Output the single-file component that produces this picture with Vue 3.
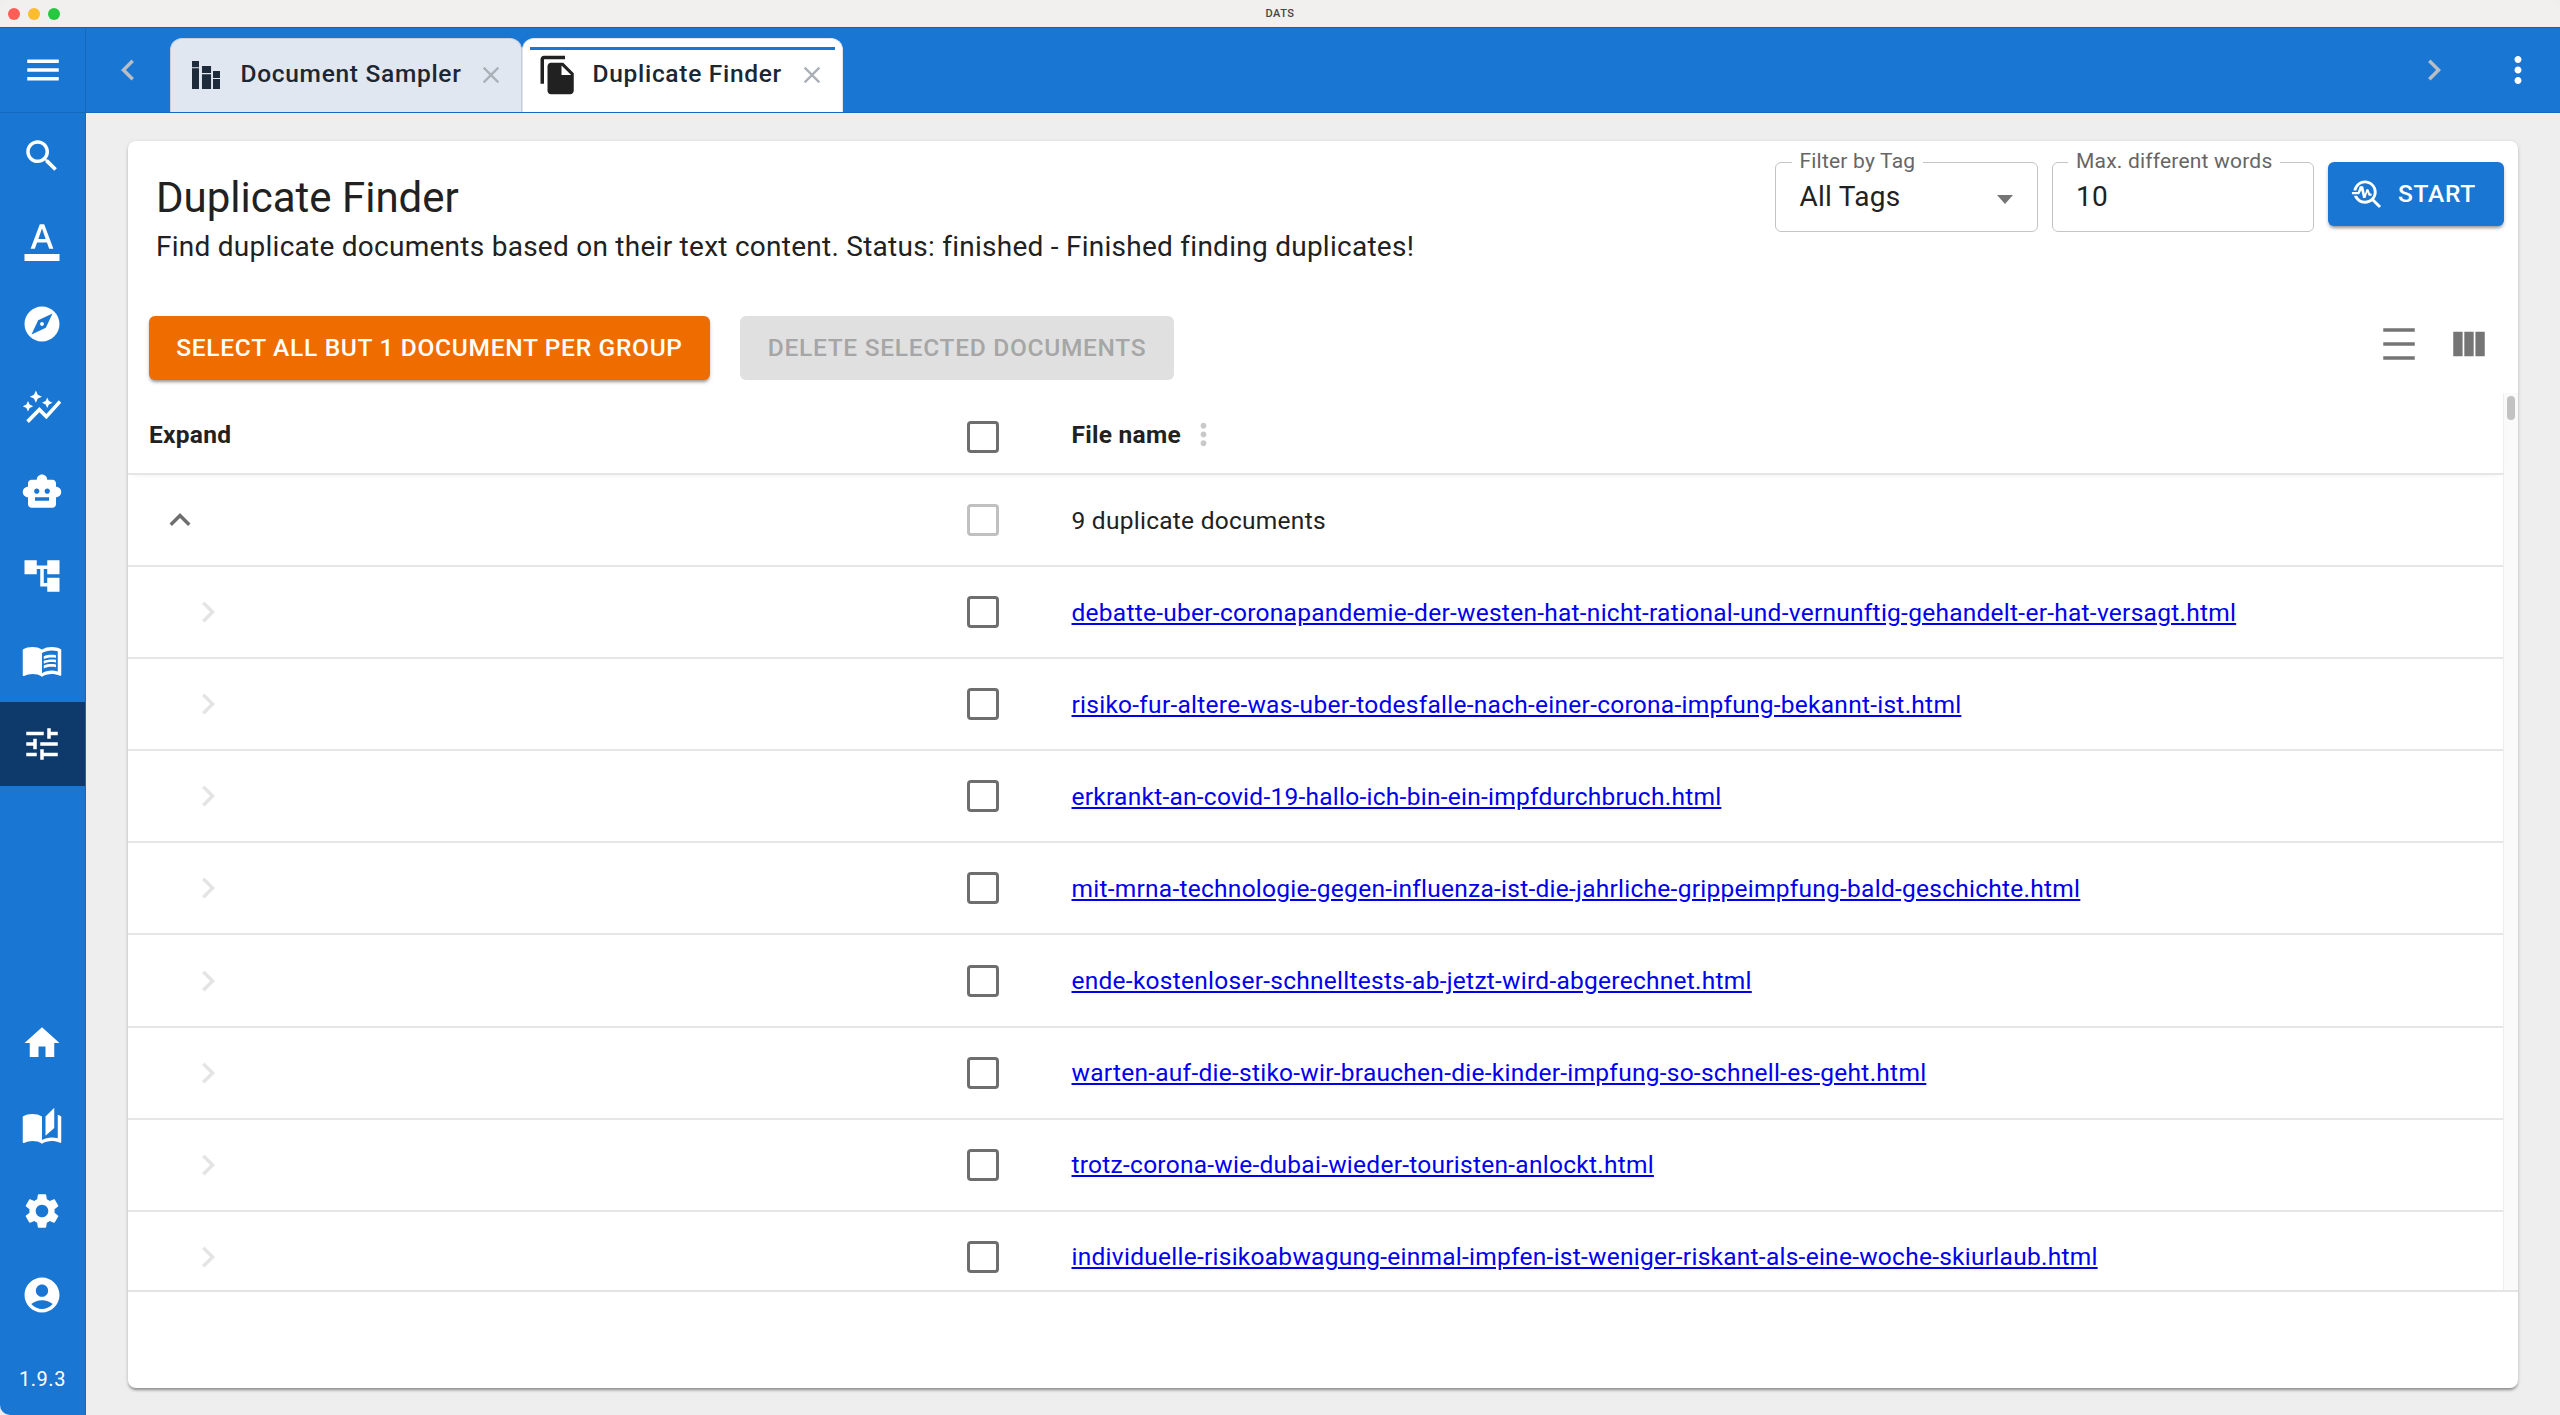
<script setup>
const I = {
  menu: 'M3 18h18v-2H3v2zm0-5h18v-2H3v2zm0-7v2h18V6H3z',
  search: 'M15.5 14h-.79l-.28-.27C15.41 12.59 16 11.11 16 9.5 16 5.91 13.09 3 9.5 3S3 5.91 3 9.5 5.91 16 9.5 16c1.61 0 3.09-.59 4.23-1.57l.27.28v.79l5 4.99L20.49 19l-4.99-5zm-6 0C7.01 14 5 11.99 5 9.5S7.01 5 9.5 5 14 7.01 14 9.5 11.99 14 9.5 14z',
  text: 'M2 20h20v4H2v-4zm3.49-3h2.42l1.27-3.58h5.65L16.09 17h2.42L13.25 3h-2.5L5.49 17zm4.42-5.61 2.03-5.79h.12l2.03 5.79H9.91z',
  explore: 'M12 10.9c-.61 0-1.1.49-1.1 1.1s.49 1.1 1.1 1.1c.61 0 1.1-.49 1.1-1.1s-.49-1.1-1.1-1.1zM12 2C6.48 2 2 6.48 2 12s4.48 10 10 10 10-4.48 10-10S17.52 2 12 2zm2.19 12.19L6 18l3.81-8.19L18 6l-3.81 8.19z',
  graph: 'M14.06 9.94 12 9l2.06-.94L15 6l.94 2.06L18 9l-2.06.94L15 12l-.94-2.06zM4 14l.94-2.06L7 11l-2.06-.94L4 8l-.94 2.06L1 11l2.06.94L4 14zm4.5-5 1.09-2.41L12 5.5 9.59 4.41 8.5 2 7.41 4.41 5 5.5l2.41 1.09L8.5 9zm-4 11.5 6-6.01 4 4L23 8.93l-1.41-1.41-7.09 7.97-4-4L3 19l1.5 1.5z',
  robot: 'M20 9V7c0-1.1-.9-2-2-2h-3c0-1.66-1.34-3-3-3S9 3.34 9 5H6c-1.1 0-2 .9-2 2v2c-1.66 0-3 1.34-3 3s1.34 3 3 3v4c0 1.1.9 2 2 2h12c1.1 0 2-.9 2-2v-4c1.66 0 3-1.34 3-3s-1.34-3-3-3zM7.5 11.5c0-.83.67-1.5 1.5-1.5s1.5.67 1.5 1.5S9.83 13 9 13s-1.5-.67-1.5-1.5zM16 17H8v-2h8v2zm-1-4c-.83 0-1.5-.67-1.5-1.5S14.17 10 15 10s1.5.67 1.5 1.5S15.83 13 15 13z',
  tree: 'M22 11V3h-7v3H9V3H2v8h7V8h2v10h4v3h7v-8h-7v3h-2V8h2v3z',
  book: 'M21 5c-1.11-.35-2.33-.5-3.5-.5-1.95 0-4.05.4-5.5 1.5-1.45-1.1-3.55-1.5-5.5-1.5S2.45 4.9 1 6v14.65c0 .25.25.5.5.5.1 0 .15-.05.25-.05C3.1 20.45 5.05 20 6.5 20c1.95 0 4.05.4 5.5 1.5 1.35-.85 3.8-1.5 5.5-1.5 1.65 0 3.35.3 4.75 1.05.1.05.15.05.25.05.25 0 .5-.25.5-.5V6c-.6-.45-1.25-.75-2-1zm0 13.5c-1.1-.35-2.3-.5-3.5-.5-1.7 0-4.15.65-5.5 1.5V8c1.35-.85 3.8-1.5 5.5-1.5 1.2 0 2.4.15 3.5.5v11.5zM17.5 10.5c.88 0 1.73.09 2.5.26V9.24c-.79-.15-1.64-.24-2.5-.24-1.7 0-3.24.29-4.5.83v1.66c1.13-.64 2.7-.99 4.5-.99zM13 12.49v1.66c1.13-.64 2.7-.99 4.5-.99.88 0 1.73.09 2.5.26V11.9c-.79-.15-1.64-.24-2.5-.24-1.7 0-3.24.3-4.5.83zm4.5 1.84c-1.7 0-3.24.29-4.5.83v1.66c1.13-.64 2.7-.99 4.5-.99.88 0 1.73.09 2.5.26v-1.52c-.79-.16-1.64-.24-2.5-.24z',
  tune: 'M3 17v2h6v-2H3zM3 5v2h10V5H3zm10 16v-2h8v-2h-8v-2h-2v6h2zM7 9v2H3v2h4v2h2V9H7zm14 4v-2H11v2h10zm-6-4h2V7h4V5h-4V3h-2v6z',
  home: 'M10 20v-6h4v6h5v-8h3L12 3 2 12h3v8z',
  stories: 'M19 1l-5 5v11l5-4.5V1zM1 6v14.65c0 .25.25.5.5.5.1 0 .15-.05.25-.05C3.1 20.45 5.05 20 6.5 20c1.95 0 4.05.4 5.5 1.5V6c-1.45-1.1-3.55-1.5-5.5-1.5S2.45 4.9 1 6zm22 13.5V6c-.6-.45-1.25-.8-2-1.05v13.5c-1.1-.35-2.3-.5-3.5-.5-1.7 0-4.15.65-5.5 1.5v2.05c1.35-.85 3.8-1.5 5.5-1.5 1.65 0 3.35.3 4.75 1.05.1.05.15.05.25.05.25 0 .5-.25.5-.5v-1.1z',
  gear: 'M19.14 12.94c.04-.3.06-.61.06-.94 0-.32-.02-.64-.07-.94l2.03-1.58c.18-.14.23-.41.12-.61l-1.92-3.32c-.12-.22-.37-.29-.59-.22l-2.39.96c-.5-.38-1.03-.7-1.62-.94l-.36-2.54c-.04-.24-.24-.41-.48-.41h-3.84c-.24 0-.43.17-.47.41l-.36 2.54c-.59.24-1.13.57-1.62.94l-2.39-.96c-.22-.08-.47 0-.59.22L2.74 8.87c-.12.21-.08.47.12.61l2.03 1.58c-.05.3-.09.63-.09.94s.02.64.07.94l-2.03 1.58c-.18.14-.23.41-.12.61l1.92 3.32c.12.22.37.29.59.22l2.39-.96c.5.38 1.03.7 1.62.94l.36 2.54c.05.24.24.41.48.41h3.84c.24 0 .44-.17.47-.41l.36-2.54c.59-.24 1.13-.56 1.62-.94l2.39.96c.22.08.47 0 .59-.22l1.92-3.32c.12-.22.07-.47-.12-.61l-2.01-1.58zM12 15.6c-1.98 0-3.6-1.62-3.6-3.6s1.62-3.6 3.6-3.6 3.6 1.62 3.6 3.6-1.62 3.6-3.6 3.6z',
  user: 'M12 2C6.48 2 2 6.48 2 12s4.48 10 10 10 10-4.48 10-10S17.52 2 12 2zm0 4c1.93 0 3.5 1.57 3.5 3.5S13.93 13 12 13s-3.5-1.57-3.5-3.5S10.07 6 12 6zm0 14c-2.03 0-4.43-.82-6.14-2.88C7.55 15.8 9.68 15 12 15s4.45.8 6.14 2.12C16.43 19.18 14.03 20 12 20z',
  left: 'M15.41 16.59 10.83 12l4.58-4.59L14 6l-6 6 6 6 1.41-1.41z',
  right: 'M8.59 16.59 13.17 12 8.59 7.41 10 6l6 6-6 6-1.41-1.41z',
  up: 'M7.41 15.41 12 10.83l4.59 4.58L18 14l-6-6-6 6z',
  more: 'M12 8c1.1 0 2-.9 2-2s-.9-2-2-2-2 .9-2 2 .9 2 2 2zm0 2c-1.1 0-2 .9-2 2s.9 2 2 2 2-.9 2-2-.9-2-2-2zm0 6c-1.1 0-2 .9-2 2s.9 2 2 2 2-.9 2-2-.9-2-2-2z',
  close: 'M19 6.41 17.59 5 12 10.59 6.41 5 5 6.41 10.59 12 5 17.59 6.41 19 12 13.41 17.59 19 19 17.59 13.41 12z',
  copy: 'M16 1H4c-1.1 0-2 .9-2 2v14h2V3h12V1zm-1 4 6 6v10c0 1.1-.9 2-2 2H7.99C6.89 23 6 22.1 6 21l.01-14c0-1.1.89-2 1.99-2h7zm-1 7h5.5L14 6.5V12z',
  sampler: 'M4 4h4v3.6H4zM4 8.2h4V20H4zM9.7 6.9h5.2v4H9.7zM9.7 11.5h5.2V20H9.7zM16 9.7h4v4h-4zM16 14.3h4V20h-4z',
  troubleshoot: 'M22 20.59l-4.69-4.69C18.37 14.55 19 12.85 19 11c0-4.42-3.58-8-8-8-4.08 0-7.44 3.05-7.93 7h2.02C5.57 7.17 8.03 5 11 5c3.31 0 6 2.69 6 6s-2.69 6-6 6c-2.42 0-4.5-1.44-5.45-3.5H3.4C4.45 16.69 7.46 19 11 19c1.85 0 3.55-.63 4.9-1.69L20.59 22 22 20.59zM8.43 9.69 9.65 15h1.64l1.26-3.78.95 2.28h2v-1.5h-1l-1.25-3h-1.31l-1.01 3.46-1.23-5.46H7.4L6.04 11H2v1.5h5z',
  density: 'M3 3h18v2H3zM3 11h18v2H3zM3 19h18v2H3z',
  columns: 'M14.67 5v14H9.33V5h5.34zm1 14H21V5h-5.33v14zm-7.34 0V5H3v14h5.33z',
}
const railTop = [
  ['search', false], ['text', false], ['explore', false], ['graph', false],
  ['robot', false], ['tree', false], ['book', false], ['tune', true],
]
const railBottom = ['home', 'stories', 'gear', 'user']
const files = [
  'debatte-uber-coronapandemie-der-westen-hat-nicht-rational-und-vernunftig-gehandelt-er-hat-versagt.html',
  'risiko-fur-altere-was-uber-todesfalle-nach-einer-corona-impfung-bekannt-ist.html',
  'erkrankt-an-covid-19-hallo-ich-bin-ein-impfdurchbruch.html',
  'mit-mrna-technologie-gegen-influenza-ist-die-jahrliche-grippeimpfung-bald-geschichte.html',
  'ende-kostenloser-schnelltests-ab-jetzt-wird-abgerechnet.html',
  'warten-auf-die-stiko-wir-brauchen-die-kinder-impfung-so-schnell-es-geht.html',
  'trotz-corona-wie-dubai-wieder-touristen-anlockt.html',
  'individuelle-risikoabwagung-einmal-impfen-ist-weniger-riskant-als-eine-woche-skiurlaub.html',
]
</script>

<template>
  <div class="window">
    <div class="titlebar">
      <span class="dot red"></span><span class="dot yellow"></span><span class="dot green"></span>
      <span class="wintitle">DATS</span>
    </div>
    <div class="appbar">
      <div class="menu-cell"><svg class="ic42 white" viewBox="0 0 24 24"><path :d="I.menu" /></svg></div>
      <svg class="nav-arrow left" viewBox="0 0 24 24"><path :d="I.left" /></svg>
      <div class="tab">
        <svg class="tab-ic sampler" viewBox="0 0 24 24"><path :d="I.sampler" /></svg>
        <span class="tab-label">Document Sampler</span>
        <svg class="tab-x" viewBox="0 0 24 24"><path :d="I.close" /></svg>
      </div>
      <div class="tab active">
        <svg class="tab-ic" viewBox="0 0 24 24"><path :d="I.copy" /></svg>
        <span class="tab-label">Duplicate Finder</span>
        <svg class="tab-x" viewBox="0 0 24 24"><path :d="I.close" /></svg>
      </div>
      <div class="spacer"></div>
      <svg class="nav-arrow right" viewBox="0 0 24 24"><path :d="I.right" /></svg>
      <svg class="more-ic" viewBox="0 0 24 24"><path :d="I.more" /></svg>
    </div>
    <div class="body">
      <nav class="rail">
        <div class="rail-top">
          <div v-for="r in railTop" :key="r[0]" class="rail-item" :class="{ on: r[1] }">
            <svg class="ic42 white" viewBox="0 0 24 24"><path :d="I[r[0]]" /></svg>
          </div>
        </div>
        <div class="rail-bottom">
          <div v-for="r in railBottom" :key="r" class="rail-item">
            <svg class="ic42 white" viewBox="0 0 24 24"><path :d="I[r]" /></svg>
          </div>
          <div class="version">1.9.3</div>
        </div>
      </nav>
      <main class="main">
        <section class="card">
          <header class="head">
            <div class="head-text">
              <h1>Duplicate Finder</h1>
              <p>Find duplicate documents based on their text content. Status: finished - Finished finding duplicates!</p>
            </div>
            <div class="controls">
              <div class="field">
                <span class="legend">Filter by Tag</span>
                <span class="value">All Tags</span>
                <span class="caret"></span>
              </div>
              <div class="field">
                <span class="legend">Max. different words</span>
                <span class="value">10</span>
              </div>
              <button class="btn start">
                <svg class="start-ic" viewBox="0 0 24 24"><path :d="I.troubleshoot" /></svg>
                START
              </button>
            </div>
          </header>
          <div class="toolbar">
            <button class="btn orange">SELECT ALL BUT 1 DOCUMENT PER GROUP</button>
            <button class="btn disabled">DELETE SELECTED DOCUMENTS</button>
            <div class="spacer"></div>
            <svg class="tool-ic" viewBox="0 0 24 24"><path :d="I.density" /></svg>
            <svg class="tool-ic" viewBox="0 0 24 24"><path :d="I.columns" /></svg>
          </div>
          <div class="table">
            <div class="track"><div class="thumb"></div></div>
            <div class="row headrow">
              <div class="c1 th">Expand</div>
              <div class="c2"><span class="box"></span></div>
              <div class="c3 th">File name
                <svg class="col-more" viewBox="0 0 24 24"><path :d="I.more" /></svg>
              </div>
            </div>
            <div class="row">
              <div class="c1"><svg class="chev-up" viewBox="0 0 24 24"><path :d="I.up" /></svg></div>
              <div class="c2"><span class="box light"></span></div>
              <div class="c3">9 duplicate documents</div>
            </div>
            <div v-for="f in files" :key="f" class="row">
              <div class="c1"><svg class="chev-r" viewBox="0 0 24 24"><path :d="I.right" /></svg></div>
              <div class="c2"><span class="box"></span></div>
              <div class="c3"><a href="#">{{ f }}</a></div>
            </div>
          </div>
        </section>
      </main>
    </div>
  </div>
</template>

<style>
html, body { margin: 0; padding: 0; background: #fff; }
</style>

<style scoped>
.window { width: 2560px; height: 1415px; display: flex; flex-direction: column; overflow: hidden; font-family: Roboto, "Liberation Sans", sans-serif; background: #eeeeee; color: #212121; }
.titlebar { height: 27px; flex: none; background: #f1f0ee; display: flex; align-items: center; padding-left: 8px; gap: 8px; position: relative; border-radius: 10px 10px 0 0; box-sizing: border-box; }
.dot { width: 12px; height: 12px; border-radius: 50%; }
.red { background: #fc5f57; } .yellow { background: #fdbb2e; } .green { background: #27c840; }
.wintitle { position: absolute; left: 0; right: 0; text-align: center; font-size: 11px; font-weight: 500; color: #444; letter-spacing: .5px; }
.appbar { height: 86px; flex: none; background: #1976d2; border-top: 1px solid #1363b8; border-bottom: 1px solid #1668bf; box-sizing: border-box; display: flex; align-items: flex-end; }
.menu-cell { width: 86px; height: 84px; flex: none; display: flex; align-items: center; justify-content: center; border-right: 1px solid #1668bf; box-sizing: border-box; }
.ic42 { width: 42px; height: 42px; }
.white { fill: #fff; }
.nav-arrow { width: 42px; height: 42px; fill: #b9bec4; align-self: center; flex: none; }
.nav-arrow.left { margin: 0 21px 0 21px; }
.nav-arrow.right { margin-right: 42px; }
.more-ic { width: 42px; height: 42px; fill: #fff; align-self: center; margin-right: 21px; flex: none; }
.tab { height: 74px; box-sizing: border-box; width: 352px; flex: none; background: #e0e7f1; border-radius: 12px 12px 0 0; border: 1px solid #c5cfdc; border-bottom: 0; display: flex; align-items: flex-start; padding: 0 16px 0 14px; position: relative; }
.tab.active { width: 321px; background: #fff; border-color: #dfe5ec; }
.tab.active::before { content: ""; position: absolute; left: 7px; right: 7px; top: 8px; height: 3px; background: #1976d2; }
.tab-ic { width: 42px; height: 42px; fill: #212121; flex: none; margin-top: 15px; }
.tab-ic.sampler { fill: #1d2b3a; }
.tab-label { font-size: 24.5px; font-weight: 500; color: #1c2733; margin-left: 13.5px; letter-spacing: .7px; line-height: 69px; white-space: nowrap; }
.tab-x { width: 28px; height: 28px; fill: #aab0b6; margin: 22px 0 0 auto; flex: none; }
.spacer { flex: 1; }
.body { flex: 1; display: flex; min-height: 0; }
.rail { width: 86px; flex: none; background: #1976d2; border-right: 1px solid #1668bf; box-sizing: border-box; display: flex; flex-direction: column; justify-content: space-between; border-bottom-left-radius: 10px; padding-top: 1px; }
.rail-item { height: 84px; display: flex; align-items: center; justify-content: center; padding-right: 1px; box-sizing: border-box; }
.rail-item.on { background: #0d3a6b; }
.version { height: 73px; margin-top: 5px; display: flex; align-items: center; justify-content: center; color: #fff; font-size: 20px; letter-spacing: .5px; }
.main { flex: 1; padding: 28px 42px 27px 42px; min-width: 0; }
.card { height: 100%; background: #fff; border-radius: 8px; box-shadow: 0 3px 3px -1px rgba(0,0,0,.35), 0 1px 4px rgba(0,0,0,.15); display: flex; flex-direction: column; overflow: hidden; }
.head { display: flex; justify-content: space-between; padding: 21px 14px 0 28px; height: 175px; box-sizing: border-box; flex: none; }
.head-text h1 { margin: 11px 0 0; font-size: 42px; font-weight: 400; color: #212121; line-height: 49px; }
.head-text p { margin: 4.5px 0 0; font-size: 28px; letter-spacing: .26px; color: #212121; line-height: 40px; }
.controls { display: flex; gap: 14px; align-items: flex-start; }
.field { width: 262.5px; height: 70px; border: 1.5px solid #c4c4c4; border-radius: 6px; box-sizing: border-box; position: relative; display: flex; align-items: center; padding: 0 0 2px 23.5px; }
.legend { position: absolute; left: 15.5px; top: -14px; background: #fff; padding: 0 8px; font-size: 21px; letter-spacing: .2px; line-height: 24px; color: #666; white-space: nowrap; }
.value { font-size: 28px; letter-spacing: .26px; color: #212121; }
.caret { position: absolute; right: 24px; top: 32px; border: 8px solid transparent; border-top: 9px solid #757575; border-bottom: 0; }
.btn { border: 0; border-radius: 6px; font-family: inherit; font-weight: 500; font-size: 24.5px; letter-spacing: .7px; box-sizing: border-box; white-space: nowrap; display: flex; align-items: center; justify-content: center; padding: 0 0 2px; }
.start { width: 176px; height: 64px; background: #1976d2; color: #fff; gap: 14px; padding-right: 7px; box-shadow: 0 3px 3px -1px rgba(0,0,0,.3), 0 2px 4px rgba(0,0,0,.15); }
.start-ic { width: 35px; height: 35px; fill: #fff; }
.toolbar { display: flex; align-items: center; padding: 0 28px 0 21px; height: 64px; flex: none; gap: 28px; }
.orange { width: 561px; height: 64px; background: #ef6c00; color: #fff; box-shadow: 0 3px 3px -1px rgba(0,0,0,.3), 0 2px 4px rgba(0,0,0,.15); }
.disabled { width: 434px; height: 64px; margin-left: 2px; background: #e0e0e0; color: #a6a6a6; }
.tool-ic { width: 42px; height: 42px; fill: #757575; margin-top: -8px; }
.table { flex: none; height: 911.5px; overflow: hidden; position: relative; border-bottom: 2px solid #e4e4e4; box-sizing: border-box; padding-top: 15px; }
.track { position: absolute; right: 0; top: 13px; bottom: 0; width: 15px; background: #fafafa; border-left: 1px solid #eeeeee; box-sizing: border-box; }
.thumb { position: absolute; right: 3px; top: 3px; width: 8px; height: 24px; background: #c2c2c2; border-radius: 4px; }
.row { height: 92.1px; display: flex; align-items: center; border-bottom: 2px solid #e6e6e6; box-sizing: border-box; font-size: 24.5px; letter-spacing: .26px; margin-right: 14px; }
.headrow { height: 80px; box-shadow: 0 4px 8px -6px rgba(0,0,0,.12); position: relative; padding-top: 1px; }
.c1 { width: 842px; flex: none; padding-left: 21px; box-sizing: border-box; display: flex; align-items: center; }
.c2 { width: 101.5px; flex: none; display: flex; }
.c3 { flex: 1; display: flex; align-items: center; white-space: nowrap; }
.th { font-weight: 700; color: #212121; }
.box { width: 32px; height: 32px; border: 3.5px solid #6e6e6e; border-radius: 4px; box-sizing: border-box; display: block; margin-left: -3px; }
.headrow .box { margin-top: 5px; }
.box.light { border-color: #c0c0c0; }
.chev-up { width: 42px; height: 42px; fill: #6e6e6e; margin-left: 10px; }
.chev-r { width: 42px; height: 42px; fill: #e4e4e4; margin-left: 37.5px; }
.col-more { width: 35px; height: 35px; fill: #c9c9c9; margin-left: 5px; }
a { color: #0000ee; text-decoration: underline; }
</style>
